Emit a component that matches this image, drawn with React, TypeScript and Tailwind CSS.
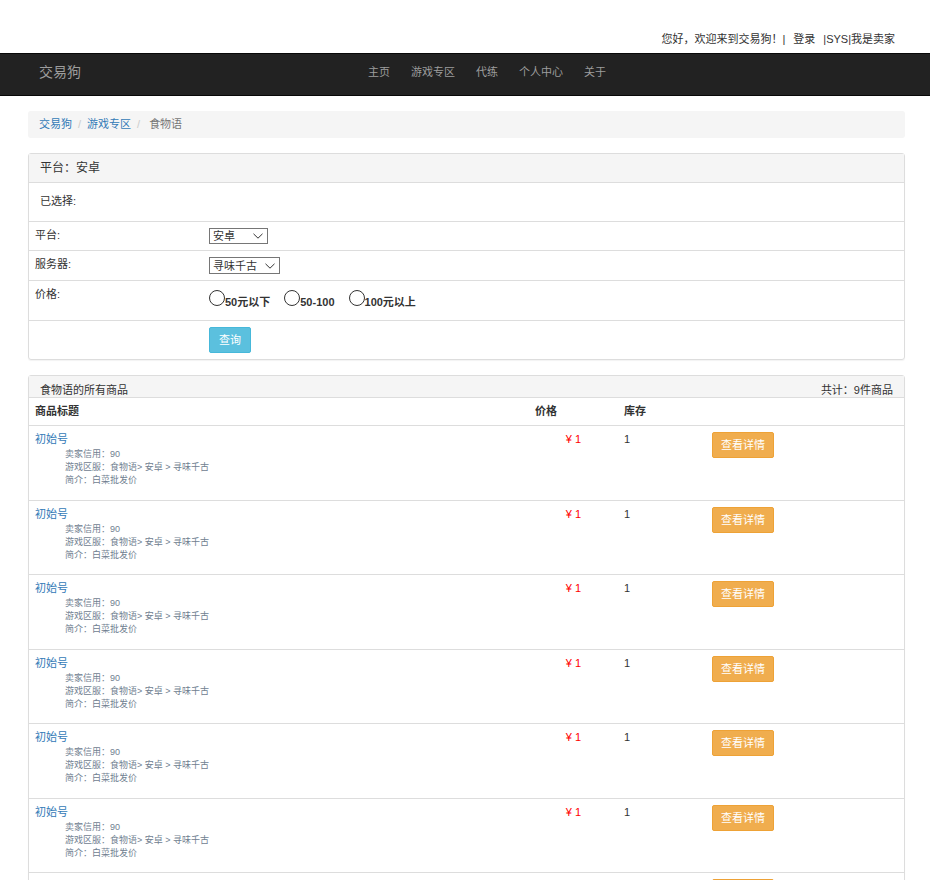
import React from "react";

const navItems = ["主页", "游戏专区", "代练", "个人中心", "关于"];

const priceRanges = ["50元以下", "50-100", "100元以上"];

const products = Array.from({ length: 9 }, (_, i) => ({
  id: i + 1,
  title: "初始号",
  credit: 90,
  zone: "食物语> 安卓 > 寻味千古",
  intro: "白菜批发价",
  price: 1,
  stock: 1,
}));

function Select({ id, options, className }: { id: string; options: string[]; className: string }) {
  return (
    <div className={`relative ${className}`}>
      <select
        id={id}
        className="block h-full w-full appearance-none rounded-none border border-[#767676] bg-white pl-[3px] text-[11px] leading-[14px] text-[#333]"
      >
        {options.map((o) => (
          <option key={o}>{o}</option>
        ))}
      </select>
      <svg
        className="pointer-events-none absolute top-1/2 right-[5px] h-[6px] w-[10px] -translate-y-1/2"
        viewBox="0 0 10 6"
        fill="none"
        stroke="#333"
      >
        <path d="M0.5 0.8 L5 5.2 L9.5 0.8" />
      </svg>
    </div>
  );
}

function FilterRow({ label, htmlFor, children }: { label?: string; htmlFor?: string; children: React.ReactNode }) {
  return (
    <div className="flex border-t border-[#ddd] p-[6px]">
      <div className="w-[174px] shrink-0">{label && <label htmlFor={htmlFor}>{label}</label>}</div>
      {children}
    </div>
  );
}

export default function App() {
  return (
    <div className="bg-white font-['Liberation_Sans','Noto_Sans_CJK_SC',sans-serif] text-[11px] leading-[15px] text-[#333]">
      <div className="flex h-[53px] items-end justify-end pr-[35px] pb-[6px]">
        <span>您好，欢迎来到交易狗！|</span>
        <a href="#login" className="mx-2">登录</a>
        <span>|</span>
        <a href="#sys">SYS</a>
        <span>|</span>
        <a href="#seller">我是卖家</a>
      </div>

      <nav className="flex h-[43px] border-y border-[#080808] bg-[#222] pt-[11px] pl-[39px] text-[#9d9d9d]">
        <a href="#home" className="w-[329px] text-[14px]">交易狗</a>
        <ul className="flex gap-[21px]">
          {navItems.map((n) => (
            <li key={n}>
              <a href={`#${n}`}>{n}</a>
            </li>
          ))}
        </ul>
      </nav>

      <main className="pt-[15px] pr-[25px] pl-7">
        <ol className="flex h-[27px] items-center rounded-[3px] bg-[#f5f5f5] px-[11px]">
          <li><a href="#home" className="text-[#337ab7]">交易狗</a></li>
          <li className="px-[6px] text-[#ccc]">/</li>
          <li><a href="#games" className="text-[#337ab7]">游戏专区</a></li>
          <li className="pr-[9px] pl-[6px] text-[#ccc]">/</li>
          <li className="text-[#777]">食物语</li>
        </ol>

        <section className="mt-[15px] rounded-[3px] border border-[#ddd] shadow-[0_1px_1px_rgba(0,0,0,0.05)]">
          <h3 className="box-content h-7 border-b border-[#ddd] bg-[#f5f5f5] px-[11px] text-[12px] leading-7">平台：安卓</h3>
          <p className="px-[11px] pt-[11px] pb-3">已选择:</p>
          <form onSubmit={(e) => e.preventDefault()}>
            <FilterRow label="平台:" htmlFor="platform">
              <Select id="platform" options={["安卓", "苹果"]} className="h-4 w-[59px]" />
            </FilterRow>
            <FilterRow label="服务器:" htmlFor="server">
              <Select id="server" options={["寻味千古"]} className="h-[17px] w-[71px]" />
            </FilterRow>
            <div className="flex border-t border-[#ddd] p-[6px]" role="radiogroup" aria-labelledby="price-label">
              <div className="w-[174px] shrink-0" id="price-label">价格:</div>
              <div className="flex gap-[14px] pt-[3px] pb-2">
                {priceRanges.map((r) => (
                  <label key={r} className="flex h-4 font-bold">
                    <input
                      type="radio"
                      name="price"
                      className="m-0 size-4 appearance-none rounded-full border border-[#333] bg-white checked:bg-[#333]"
                    />
                    <span className="pt-[5px]">{r}</span>
                  </label>
                ))}
              </div>
            </div>
            <FilterRow>
              <button
                type="submit"
                className="h-[26px] rounded-[2px] border border-[#46b8da] bg-[#5bc0de] px-[9px] text-white"
              >
                查询
              </button>
            </FilterRow>
          </form>
        </section>

        <section className="mt-[15px] rounded-[3px] border border-[#ddd] shadow-[0_1px_1px_rgba(0,0,0,0.05)]">
          <header className="flex h-[21px] justify-between bg-[#f5f5f5] px-[11px] pt-[7px]">
            <h3>食物语的所有商品</h3>
            <span>共计：9件商品</span>
          </header>
          <table className="w-full table-fixed border-separate border-spacing-0 text-left">
            <thead>
              <tr className="h-7">
                <th className="border-t border-[#ddd] px-[6px]">商品标题</th>
                <th className="w-[89px] border-t border-[#ddd] px-[6px]">价格</th>
                <th className="w-[88px] border-t border-[#ddd] px-[6px]">库存</th>
                <th className="w-[198px] border-t border-[#ddd] px-[6px]"></th>
              </tr>
            </thead>
            <tbody>
              {products.map((p) => (
                <tr key={p.id} className="align-top odd:h-[75px] even:h-[74px]">
                  <td className="border-t border-[#ddd] px-[6px] pt-[6px]">
                    <a href={`#item-${p.id}`} className="block text-[#337ab7]">{p.title}</a>
                    <div className="pt-px pl-[30px] text-[9px] leading-[13px] text-[#708090]">
                      <p>卖家信用：{p.credit}</p>
                      <p>游戏区服：{p.zone}</p>
                      <p>简介：{p.intro}</p>
                    </div>
                  </td>
                  <td className="border-t border-[#ddd] px-[6px] pt-[6px] text-center text-[#f00]">¥ {p.price}</td>
                  <td className="border-t border-[#ddd] px-[6px] pt-[6px]">{p.stock}</td>
                  <td className="border-t border-[#ddd] px-[6px] pt-[6px]">
                    <button
                      type="button"
                      className="block h-[26px] rounded-[2px] border border-[#eea236] bg-[#f0ad4e] px-[8px] text-white"
                    >
                      查看详情
                    </button>
                  </td>
                </tr>
              ))}
            </tbody>
          </table>
        </section>
      </main>
    </div>
  );
}
